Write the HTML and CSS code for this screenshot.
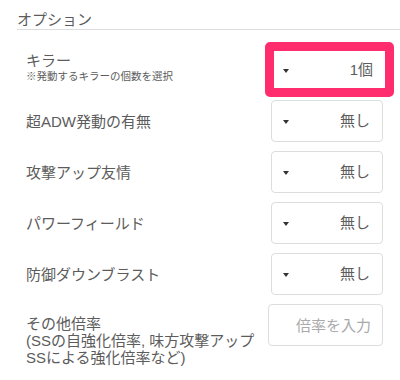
FILE: index.html
```html
<!DOCTYPE html>
<html lang="ja">
<head>
<meta charset="utf-8">
<link rel="stylesheet" href="styles.css">
</head>
<body>
<div class="options">
  <h2 class="title">オプション</h2>

  <div class="row row-killer">
    <div class="label label-two">
      <div class="name">キラー</div>
      <div class="note">※発動するキラーの個数を選択</div>
    </div>
    <div class="select select-hl"><span class="caret"></span><span class="value">1個</span></div>
  </div>

  <div class="row row-first">
    <div class="label"><div class="name">超ADW発動の有無</div></div>
    <div class="select"><span class="caret"></span><span class="value">無し</span></div>
  </div>

  <div class="row">
    <div class="label"><div class="name">攻撃アップ友情</div></div>
    <div class="select"><span class="caret"></span><span class="value">無し</span></div>
  </div>

  <div class="row">
    <div class="label"><div class="name">パワーフィールド</div></div>
    <div class="select"><span class="caret"></span><span class="value">無し</span></div>
  </div>

  <div class="row">
    <div class="label"><div class="name">防御ダウンブラスト</div></div>
    <div class="select"><span class="caret"></span><span class="value">無し</span></div>
  </div>

  <div class="row row-top">
    <div class="label label-multi">
      <div class="name">その他倍率</div>
      <div class="name">(SSの自強化倍率, 味方攻撃アップ</div>
      <div class="name">SSによる強化倍率など)</div>
    </div>
    <input class="text-input" type="text" placeholder="倍率を入力">
  </div>
</div>
</body>
</html>
```

FILE: styles.css
```css
html, body {
  margin: 0;
  padding: 0;
  background: #ffffff;
}

body {
  width: 400px;
  height: 380px;
  overflow: hidden;
  font-family: "Liberation Sans", "Noto Sans CJK JP", sans-serif;
  color: #5c5c5c;
}

.options {
  display: flex;
  flex-direction: column;
}

.title {
  margin: 11px 0 0 17px;
  padding: 0;
  font-size: 15px;
  font-weight: normal;
  line-height: 18px;
  color: #5c5c5c;
  border-bottom: 1px solid #dcdcdc;
}

.row {
  display: flex;
  justify-content: space-between;
  align-items: center;
  padding-left: 26px;
  margin-top: 9px;
}

.row-killer {
  margin-top: 12px;
}

.row-first {
  margin-top: 3px;
}

.row-top {
  align-items: flex-start;
}

.label {
  display: flex;
  flex-direction: column;
}

.name {
  font-size: 15px;
  line-height: 17px;
  color: #5c5c5c;
  white-space: nowrap;
}

.label-two {
  padding-bottom: 4px;
}

.note {
  font-size: 10.5px;
  line-height: 15px;
  color: #5c5c5c;
  white-space: nowrap;
}

.label-multi {
  margin-top: 11px;
}

.select {
  position: relative;
  box-sizing: border-box;
  width: 112px;
  height: 42px;
  margin-right: 17px;
  border: 1px solid #dddddd;
  border-radius: 4px;
  background: #ffffff;
  display: flex;
  align-items: center;
  justify-content: flex-end;
  padding-right: 12px;
}

.select-hl {
  width: 129px;
  height: 55px;
  margin-right: 6px;
  border: 9px solid #ff2d6e;
  border-radius: 5px;
  padding-right: 12px;
}

.caret {
  position: absolute;
  left: 11px;
  top: 50%;
  margin-top: -1px;
  width: 0;
  height: 0;
  border-left: 3.5px solid transparent;
  border-right: 3.5px solid transparent;
  border-top: 4px solid #333333;
}

.select-hl .caret {
  left: 9px;
}

.value {
  font-size: 15px;
  line-height: 18px;
  color: #5c5c5c;
}

.text-input {
  box-sizing: border-box;
  width: 115px;
  height: 42px;
  margin: 0 17px 0 0;
  border: 1px solid #dddddd;
  border-radius: 4px;
  background: #ffffff;
  padding: 0 11px 0 0;
  text-align: right;
  font-family: "Liberation Sans", "Noto Sans CJK JP", sans-serif;
  font-size: 15px;
  color: #5c5c5c;
  outline: none;
}

.text-input::placeholder {
  color: #aaaaaa;
}
```
